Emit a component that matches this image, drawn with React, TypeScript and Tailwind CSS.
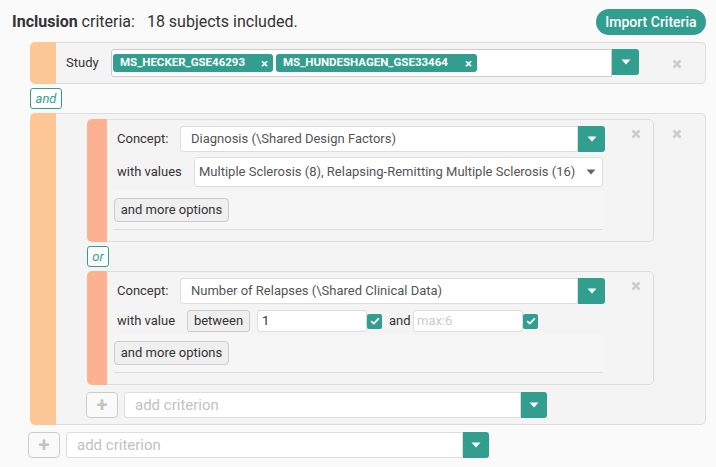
const teal = "bg-[#329e8f]"

function Cross({ color = "#cccccc", size = 10 }: { color?: string; size?: number }) {
  return (
    <svg width={size} height={size} viewBox="0 0 10 10">
      <path d="M1.5 1.5 L8.5 8.5 M8.5 1.5 L1.5 8.5" stroke={color} strokeWidth="2.6" strokeLinecap="butt" />
    </svg>
  )
}

function Caret({ color = "#ffffff" }: { color?: string }) {
  return (
    <svg width="10" height="6" viewBox="0 0 10 6">
      <path d="M0.5 0.5 L9.5 0.5 L5 5.5 Z" fill={color} />
    </svg>
  )
}

function Check() {
  return (
    <div className={`w-[15px] h-[15px] rounded-[2px] ${teal} flex items-center justify-center`}>
      <svg width="10" height="8" viewBox="0 0 10 8">
        <path d="M1.2 4.2 L3.8 6.6 L8.8 1.4" stroke="#fff" strokeWidth="1.8" fill="none" />
      </svg>
    </div>
  )
}

function TealButton({ h = "h-[26px]", w = "w-[27px]" }: { h?: string; w?: string }) {
  return (
    <div className={`${w} ${h} ${teal} rounded-r-[3px] flex items-center justify-center shrink-0`}>
      <Caret />
    </div>
  )
}

function Tag({ label, w }: { label: string; w: string }) {
  return (
    <div className={`${w} h-[18px] ${teal} rounded-[3px] flex items-center justify-between pl-[7px] pr-[5px] text-white text-[11.5px] font-bold`}>
      <span>{label}</span>
      <span className="text-[13px] leading-none">×</span>
    </div>
  )
}

function MoreOptions({ top }: { top: string }) {
  return (
    <div className={`w-[489px] mt-[3px] bg-[#f6f6f6] border-b border-[#dddddd] pb-[7px] ${top}`}>
      <div className="w-[115px] h-[24px] border border-[#cccccc] bg-[#efefef] rounded-[4px] flex items-center justify-center text-[#333]">
        and more options
      </div>
    </div>
  )
}

function AddRow({ ml }: { ml: string }) {
  return (
    <div className={`flex items-center ${ml}`}>
      <div className="w-[32px] h-[26px] border border-[#cccccc] rounded-[4px] bg-[#fafafa] flex items-center justify-center text-[#c4c4c4] text-[20px] font-bold leading-none">
        +
      </div>
      <div className="ml-[6px] w-[397px] h-[26px] bg-white border border-[#dddddd] rounded-l-[3px] flex items-center pl-[10px] text-[#c2c2c2] text-[15px]">
        add criterion
      </div>
      <TealButton w="w-[26px]" />
    </div>
  )
}

function Badge({ label, w }: { label: string; w: string }) {
  return (
    <div className={`${w} h-[21px] bg-white border border-[#329e8f] rounded-[3px] flex items-center justify-center text-[#329e8f] italic text-[13px]`}>
      {label}
    </div>
  )
}

export default function App() {
  return (
    <div className="w-[716px] h-[467px] bg-[#fafafa] pt-[9px] text-[13px] text-[#333] font-['Roboto',sans-serif] overflow-hidden">
      {/* header */}
      <div className="flex items-center justify-between h-[26px] pl-[12px] pr-[10px]">
        <div className="text-[16px] text-[#333]">
          <span className="font-bold">Inclusion</span> criteria:<span className="ml-[12px]">18 subjects included.</span>
        </div>
        <div className={`h-[26px] w-[110px] rounded-full ${teal} text-white text-[14px] font-medium flex items-center justify-center`}>
          Import Criteria
        </div>
      </div>

      {/* study */}
      <div className="ml-[30px] w-[676px] mt-[7px] h-[42px] flex">
        <div className="w-[26px] bg-[#fcc794] rounded-l-[5px]" />
        <div className="flex-1 border border-l-0 border-[#dddddd] rounded-r-[5px] bg-[#f4f4f4] flex items-start pt-[6px] pl-[10px]">
          <div className="w-[45px] h-[28px] flex items-center">Study</div>
          <div className="w-[501px] h-[28px] bg-white border border-[#cccccc] rounded-l-[3px] flex items-center gap-[3px] pl-[1px]">
            <Tag label="MS_HECKER_GSE46293" w="w-[160px]" />
            <Tag label="MS_HUNDESHAGEN_GSE33464" w="w-[201px]" />
          </div>
          <TealButton />
          <div className="ml-[33px] mt-[10px]">
            <Cross />
          </div>
        </div>
      </div>

      <div className="ml-[30px] mt-[4px]">
        <Badge label="and" w="w-[32px]" />
      </div>

      {/* group */}
      <div className="ml-[30px] w-[676px] mt-[4px] flex">
        <div className="w-[26px] bg-[#fcc794] rounded-l-[5px]" />
        <div className="flex-1 border border-l-0 border-[#dddddd] rounded-r-[5px] bg-[#f4f4f4] flex items-start pl-[31px] pt-[5px] pb-[6px]">
          <div className="w-[567px] flex flex-col">
            {/* criterion 1 */}
            <div className="flex">
              <div className="w-[20px] bg-[#fdb190] rounded-l-[5px]" />
              <div className="flex-1 border border-l-0 border-[#dddddd] rounded-r-[5px] bg-[#f4f4f4] flex items-start pl-[7px]">
                <div className="w-[491px] pt-[6px] pb-[11px]">
                  <div className="flex items-center">
                    <div className="w-[66px] pl-[3px]">Concept:</div>
                    <div className="flex-1 h-[26px] bg-white border border-[#dddddd] rounded-l-[3px] flex items-center pl-[10px] text-[#555]">
                      Diagnosis (\Shared Design Factors)
                    </div>
                    <TealButton />
                  </div>
                  <div className="flex items-center mt-[5px]">
                    <div className="w-[80px] pl-[3px]">with values</div>
                    <div className="w-[409px] h-[30px] bg-white border border-[#dddddd] rounded-[3px] flex items-center justify-between pl-[4px] pr-[6px] text-[#555]">
                      <span>Multiple Sclerosis (8), Relapsing-Remitting Multiple Sclerosis (16)</span>
                      <Caret color="#666666" />
                    </div>
                  </div>
                  <MoreOptions top="pt-[8px]" />
                </div>
                <div className="ml-[26px] mt-[9px]">
                  <Cross />
                </div>
              </div>
            </div>

            <div className="mt-[4px]">
              <Badge label="or" w="w-[22px]" />
            </div>

            {/* criterion 2 */}
            <div className="flex mt-[4px]">
              <div className="w-[20px] bg-[#fdb190] rounded-l-[5px]" />
              <div className="flex-1 border border-l-0 border-[#dddddd] rounded-r-[5px] bg-[#f4f4f4] flex items-start pl-[7px]">
                <div className="w-[491px] pt-[6px] pb-[11px]">
                  <div className="flex items-center">
                    <div className="w-[66px] pl-[3px]">Concept:</div>
                    <div className="flex-1 h-[26px] bg-white border border-[#dddddd] rounded-l-[3px] flex items-center pl-[10px] text-[#555]">
                      Number of Relapses (\Shared Clinical Data)
                    </div>
                    <TealButton />
                  </div>
                  <div className="flex items-center mt-[6px] h-[22px]">
                    <div className="w-[73px] pl-[3px]">with value</div>
                    <div className="w-[63px] h-[22px] border border-[#cccccc] bg-[#efefef] rounded-[3px] flex items-center justify-center">
                      between
                    </div>
                    <div className="ml-[7px] w-[110px] h-[22px] bg-white border border-[#dddddd] rounded-[3px] flex items-center pl-[4px]">
                      1
                    </div>
                    <Check />
                    <div className="w-[24px] ml-[7px]">and</div>
                    <div className="w-[110px] h-[22px] bg-white border border-[#dddddd] rounded-[3px] flex items-center pl-[3px] text-[#cccccc]">
                      max:6
                    </div>
                    <Check />
                  </div>
                  <MoreOptions top="pt-[6px]" />
                </div>
                <div className="ml-[26px] mt-[9px]">
                  <Cross />
                </div>
              </div>
            </div>

            <div className="mt-[7px]">
              <AddRow ml="-ml-[1px]" />
            </div>
          </div>
          <div className="ml-[18px] mt-[10px]">
            <Cross />
          </div>
        </div>
      </div>

      <div className="mt-[7px]">
        <AddRow ml="ml-[28px]" />
      </div>
    </div>
  )
}
